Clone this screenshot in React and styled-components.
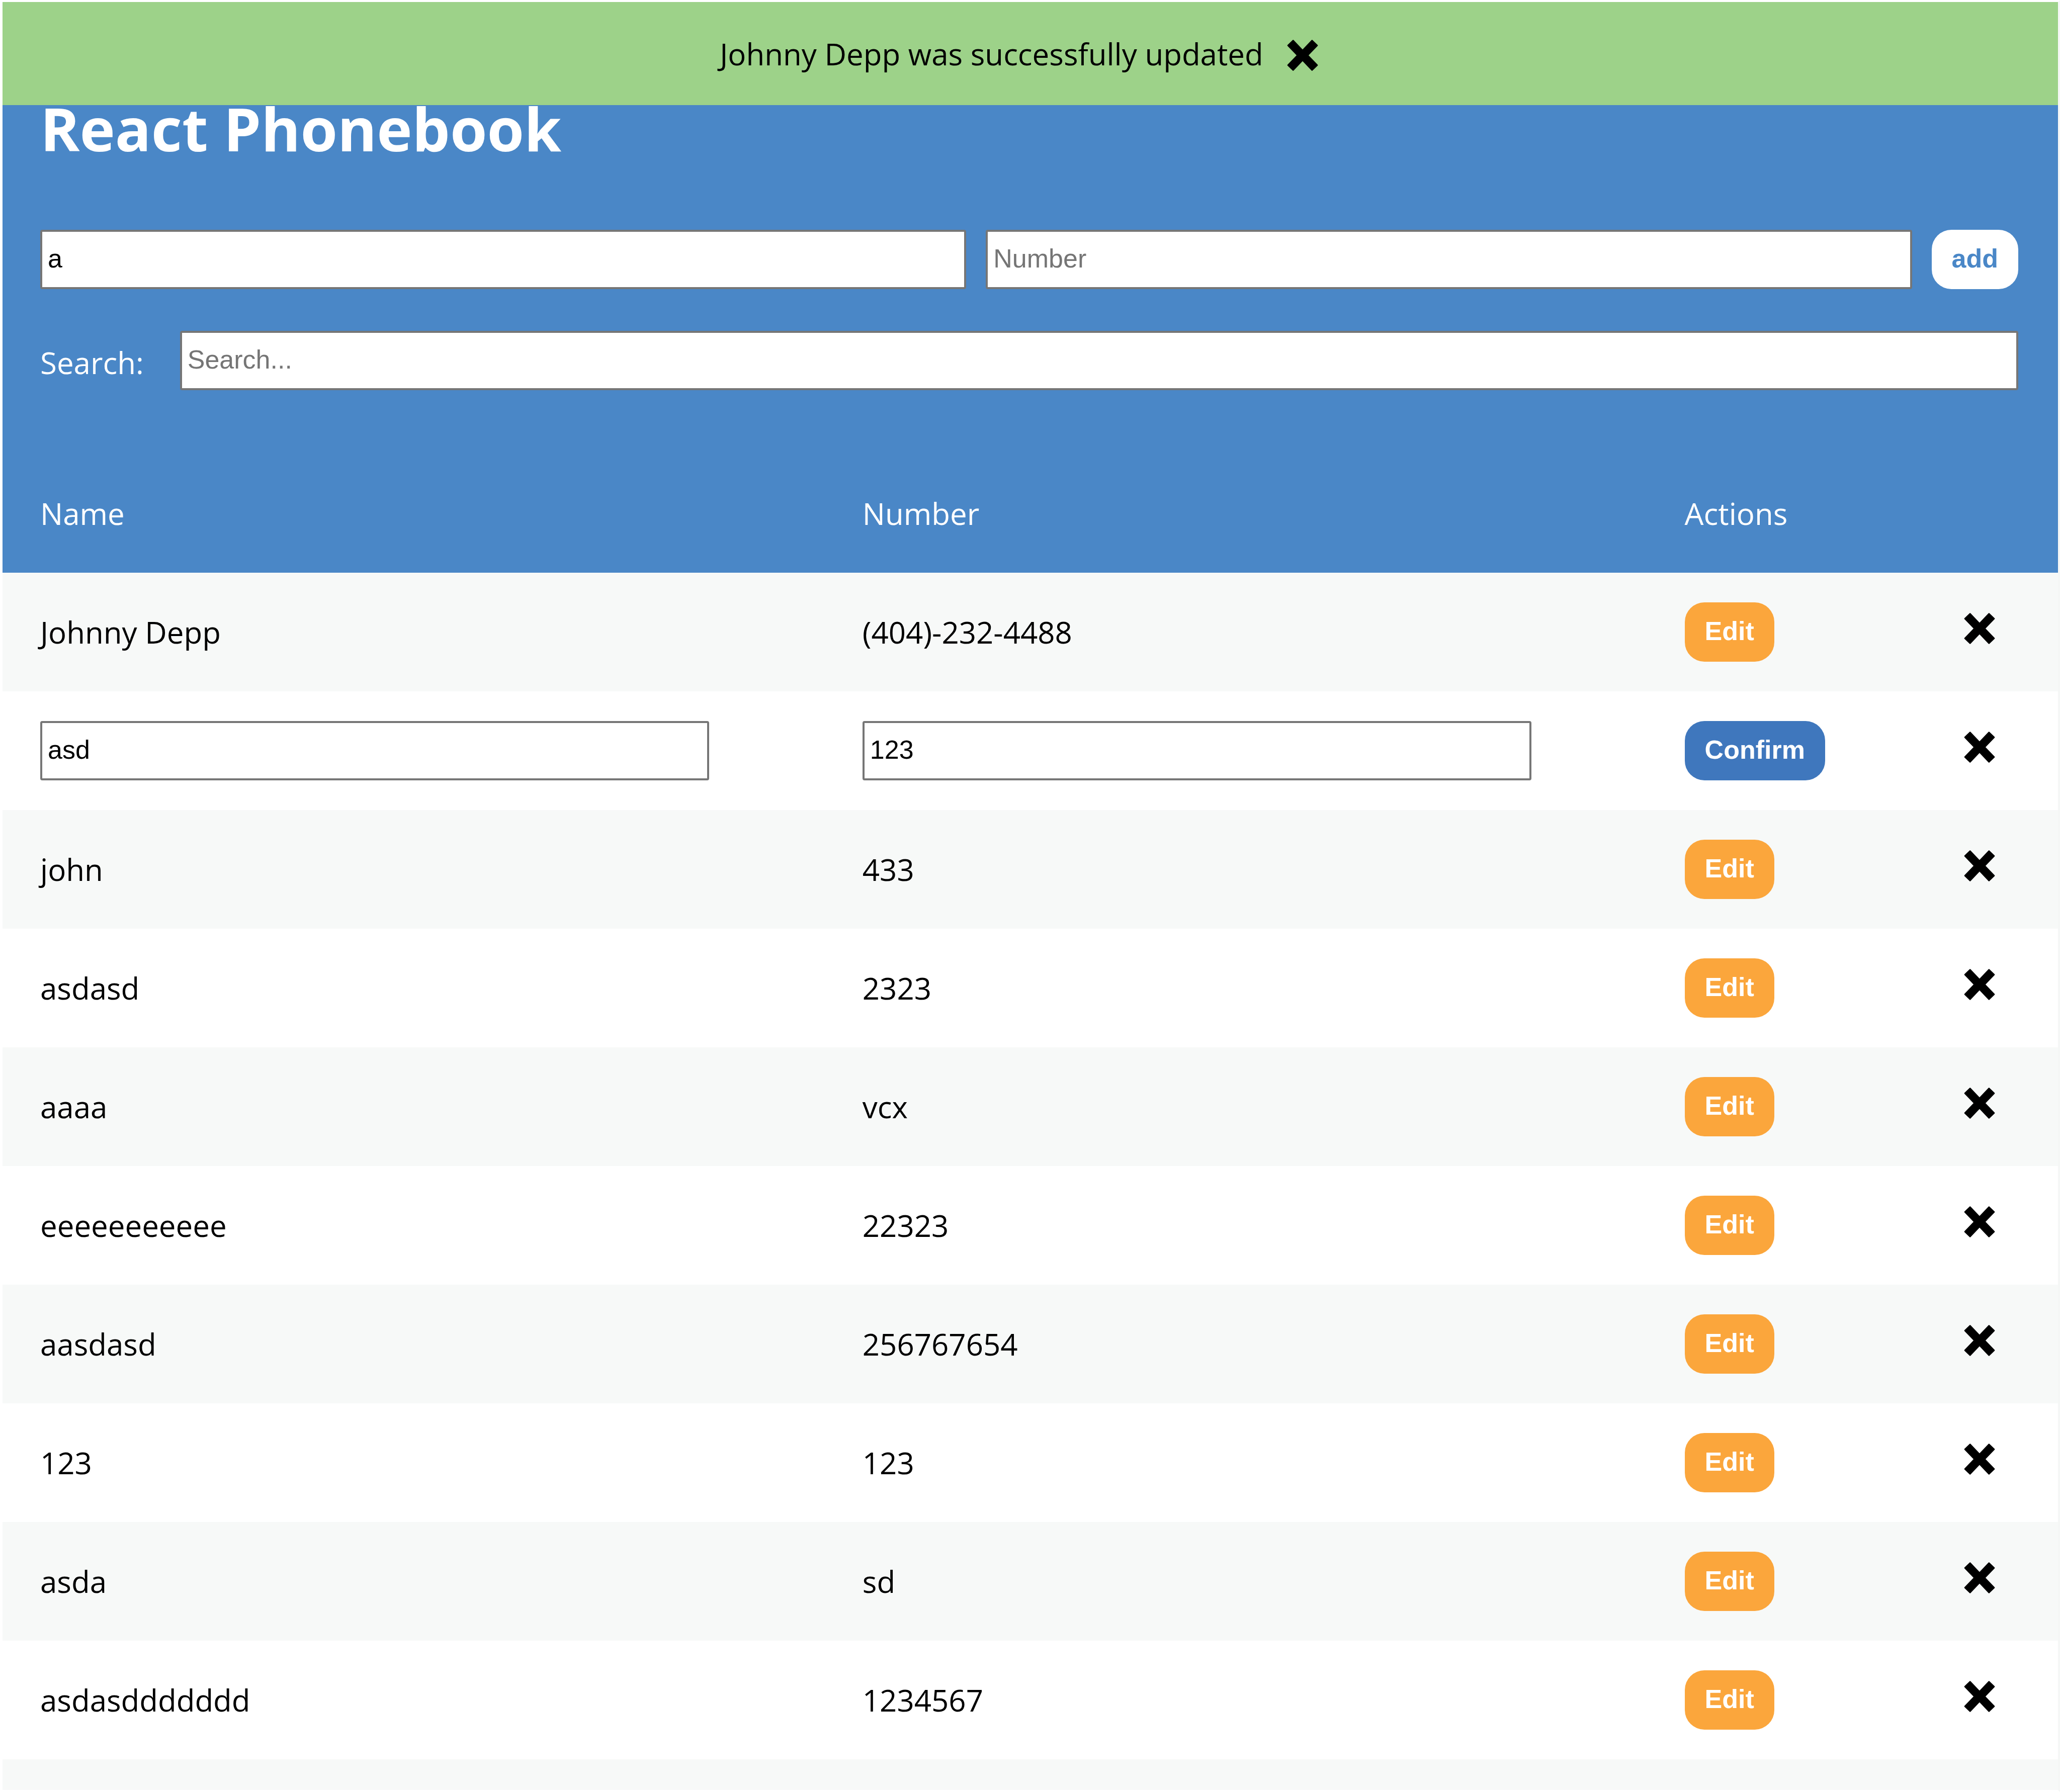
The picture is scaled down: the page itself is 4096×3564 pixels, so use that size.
import React, { useState } from "react";
import styled, { createGlobalStyle, css } from "styled-components";

const color = {
  blue: "#4a87c7",
  confirm: "#3f77bd",
  edit: "#fba63c",
  success: "#9dd289",
  stripe: "#f7f9f8",
  fieldBorder: "#767676",
};

const GlobalStyle = createGlobalStyle`
  *, *::before, *::after { box-sizing: border-box; }
  body {
    margin: 0;
    background: #fff;
    color: #000;
    font-family: "Open Sans", "Noto Sans", sans-serif;
    font-size: 60px;
    line-height: 84px;
  }
`;

const Page = styled.div`
  height: 100vh;
  overflow: hidden;
  border: 4px solid #fff;
  border-left-width: 5px;
  border-right-color: #f5f7f6;
`;

const Notification = styled.div`
  position: absolute;
  top: 4px;
  left: 5px;
  right: 4px;
  display: flex;
  align-items: center;
  justify-content: center;
  gap: 46px;
  height: 205px;
  padding-right: 44px;
  background: ${color.success};
`;

const Header = styled.header`
  padding: 171px 79px 127px 75px;
  background: ${color.blue};
  color: #fff;
`;

const Title = styled.h1`
  margin: 0;
  font-size: 119px;
  line-height: 160px;
  font-weight: 700;
`;

const Form = styled.form`
  display: flex;
  gap: 39px;
  margin-top: 122px;
`;

const SearchBar = styled.div`
  display: flex;
  align-items: center;
  gap: 72px;
  margin-top: 83px;
`;

const SearchLabel = styled.label`
  padding-top: 8px;
`;

const control = css`
  height: 118px;
  font-family: "Liberation Sans", Arial, sans-serif;
  font-size: 52px;
  line-height: 60px;
`;

const Field = styled.input`
  ${control}
  flex: 1;
  min-width: 0;
  width: ${(p) => p.$width || "auto"};
  padding: 0 11px 4px;
  border: 4px solid ${color.fieldBorder};
  border-radius: 4px;
  background: #fff;
  color: #000;
  display: block;
  outline: none;
  &::placeholder {
    color: #757575;
    opacity: 1;
  }
`;

const Button = styled.button`
  ${control}
  display: block;
  padding: 0 40px 4px;
  border: 0;
  border-radius: 39px;
  background: ${(p) => p.$background};
  color: ${(p) => p.$color || "#fff"};
  font-weight: 700;
  cursor: pointer;
`;

const IconButton = styled.button`
  display: block;
  padding: 0;
  border: 0;
  background: none;
  color: #000;
  cursor: pointer;
  svg {
    display: block;
    width: 64px;
    height: 64px;
  }
`;

const CloseButton = styled(IconButton)`
  padding-top: 6px;
`;

const Table = styled.table`
  width: 100%;
  table-layout: fixed;
  border-collapse: collapse;
`;

const Column = styled.col`
  width: ${(p) => p.$width};
`;

const HeadRow = styled.tr`
  height: 236px;
  background: ${color.blue};
  color: #fff;
`;

const Row = styled.tr`
  height: 236px;
  &:nth-child(odd) {
    background: ${color.stripe};
  }
`;

const HeadCell = styled.th`
  padding: 0 0 0 75px;
  text-align: left;
  font-weight: 400;
`;

const Cell = styled.td`
  padding: 0 0 0 75px;
  text-align: left;
`;

const DeleteCell = styled(Cell)`
  padding: 0 0 14px 0;
`;

function Cross() {
  return (
    <svg viewBox="0 0 16 16" aria-hidden="true">
      <path
        fill="currentColor"
        stroke="currentColor"
        strokeWidth="0.6"
        strokeLinejoin="round"
        d="M3.3 0.6 L8 5.5 L12.7 0.6 L15.3 3.1 L10.6 8 L15.3 12.9 L12.7 15.4 L8 10.5 L3.3 15.4 L0.7 12.9 L5.4 8 L0.7 3.1 Z"
      />
    </svg>
  );
}

const contacts = [
  { name: "Johnny Depp", number: "(404)-232-4488" },
  { name: "asd", number: "123", editing: true },
  { name: "john", number: "433" },
  { name: "asdasd", number: "2323" },
  { name: "aaaa", number: "vcx" },
  { name: "eeeeeeeeeee", number: "22323" },
  { name: "aasdasd", number: "256767654" },
  { name: "123", number: "123" },
  { name: "asda", number: "sd" },
  { name: "asdasddddddd", number: "1234567" },
];

const editWidth = "calc(85% + 4px)";

function ContactRow({ contact }) {
  const [name, setName] = useState(contact.name);
  const [number, setNumber] = useState(contact.number);
  return (
    <Row>
      {contact.editing ? (
        <>
          <Cell>
            <Field $width={editWidth} aria-label="Edit name" value={name} onChange={(e) => setName(e.target.value)} />
          </Cell>
          <Cell>
            <Field $width={editWidth} aria-label="Edit number" value={number} onChange={(e) => setNumber(e.target.value)} />
          </Cell>
        </>
      ) : (
        <>
          <Cell>{name}</Cell>
          <Cell>{number}</Cell>
        </>
      )}
      <Cell>
        <Button type="button" $background={contact.editing ? color.confirm : color.edit}>
          {contact.editing ? "Confirm" : "Edit"}
        </Button>
      </Cell>
      <DeleteCell>
        <IconButton type="button" aria-label="Delete contact">
          <Cross />
        </IconButton>
      </DeleteCell>
    </Row>
  );
}

export default function App() {
  const [name, setName] = useState("a");
  const [number, setNumber] = useState("");
  const [search, setSearch] = useState("");
  return (
    <Page>
      <GlobalStyle />
      <Header>
        <Title>React Phonebook</Title>
        <Form onSubmit={(e) => e.preventDefault()}>
          <Field aria-label="Name" placeholder="Name" value={name} onChange={(e) => setName(e.target.value)} />
          <Field aria-label="Number" placeholder="Number" value={number} onChange={(e) => setNumber(e.target.value)} />
          <Button type="submit" $background="#fff" $color={color.blue}>
            add
          </Button>
        </Form>
        <SearchBar>
          <SearchLabel htmlFor="search">Search:</SearchLabel>
          <Field id="search" placeholder="Search..." value={search} onChange={(e) => setSearch(e.target.value)} />
        </SearchBar>
      </Header>
      <Table>
        <colgroup>
          <Column $width="40%" />
          <Column $width="40%" />
          <Column />
          <Column $width="188px" />
        </colgroup>
        <thead>
          <HeadRow>
            <HeadCell scope="col">Name</HeadCell>
            <HeadCell scope="col">Number</HeadCell>
            <HeadCell scope="col" colSpan={2}>
              Actions
            </HeadCell>
          </HeadRow>
        </thead>
        <tbody>
          {contacts.map((contact, i) => (
            <ContactRow key={i} contact={contact} />
          ))}
          <Row>
            <Cell colSpan={4} />
          </Row>
        </tbody>
      </Table>
      <Notification role="status">
        Johnny Depp was successfully updated
        <CloseButton type="button" aria-label="Close notification">
          <Cross />
        </CloseButton>
      </Notification>
    </Page>
  );
}
